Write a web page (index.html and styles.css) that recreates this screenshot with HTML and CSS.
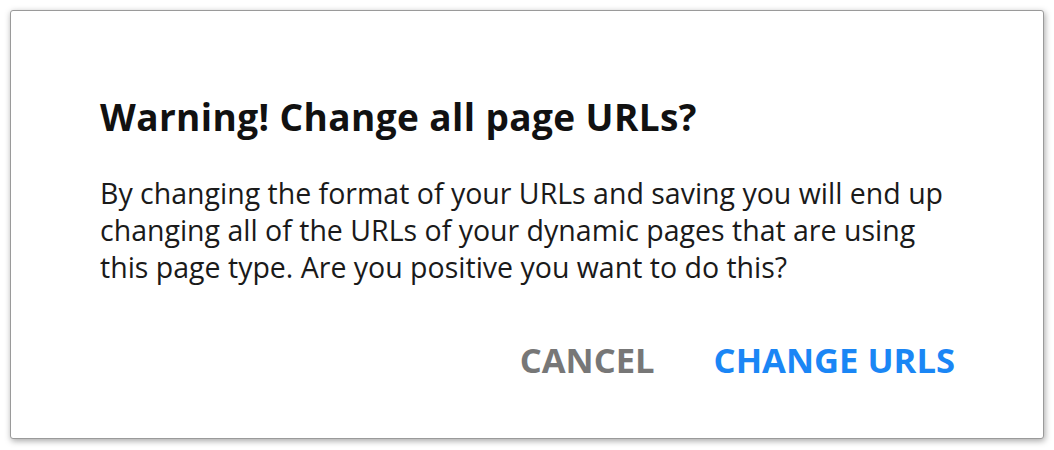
FILE: index.html
```html
<!DOCTYPE html>
<html lang="en">
<head>
    <meta charset="UTF-8">
    <title>Change page URLs</title>
    <link rel="stylesheet" href="styles.css">
</head>
<body>
    <div class="dialog">
        <h2 class="dialog-title">Warning! Change all page URLs?</h2>
        <p class="dialog-text">By changing the format of your URLs and saving you will end up changing all of the URLs of your dynamic pages that are using this page type. Are you positive you want to do this?</p>
        <div class="dialog-actions">
            <button class="btn btn-cancel">CANCEL</button>
            <button class="btn btn-confirm">CHANGE URLS</button>
        </div>
    </div>
</body>
</html>
```

FILE: styles.css
```css
body {
    font-family: 'Open Sans', sans-serif;
    background-color: #ffffff;
    margin: 0;
    padding: 10px;
}
.dialog {
    width: 1034px;
    height: 429px;
    box-sizing: border-box;
    background: #ffffff;
    border: 1px solid #9a9a9a;
    border-radius: 3px;
    box-shadow: 1px 2px 6px rgba(0, 0, 0, 0.35);
    padding: 81px 88px 0 89px;
}
.dialog-title {
    margin: 0;
    font-size: 37px;
    font-weight: 700;
    letter-spacing: 0.4px;
    color: #111111;
    line-height: 50px;
}
.dialog-text {
    margin: 33px 0 0 0;
    font-size: 28.5px;
    line-height: 37px;
    color: #1a1a1a;
    width: 856px;
}
.dialog-actions {
    display: flex;
    justify-content: flex-end;
    gap: 59px;
    margin-top: 50px;
}
.btn {
    background: none;
    border: none;
    padding: 0;
    font-family: inherit;
    font-size: 34.6px;
    font-weight: 700;
    cursor: pointer;
}
.btn-cancel {
    color: #777777;
}
.btn-confirm {
    color: #1a86f5;
}
```
